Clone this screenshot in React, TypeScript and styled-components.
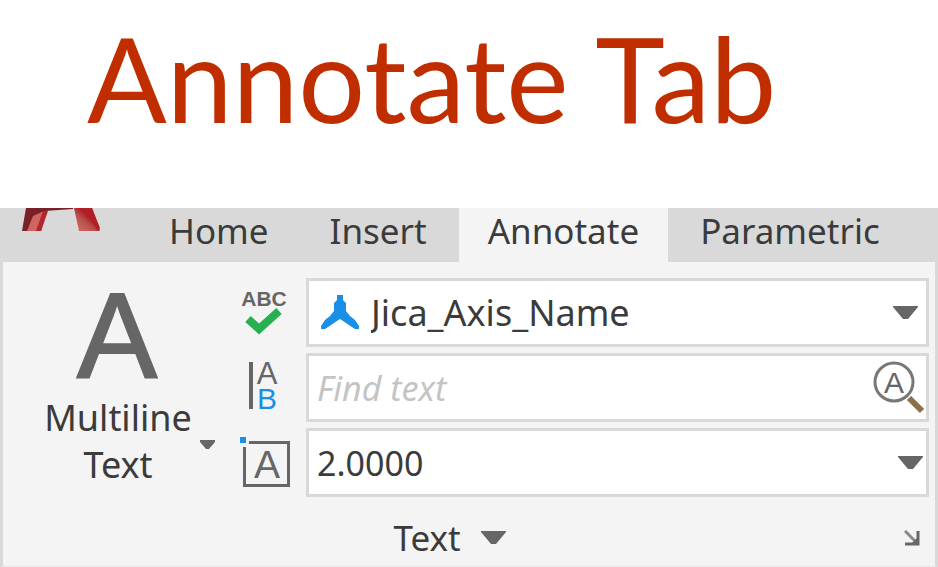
import React from 'react';
import styled, { createGlobalStyle } from 'styled-components';

const Global = createGlobalStyle`
  * { box-sizing: border-box; }
  body { margin: 0; background: #fff; font-family: "Noto Sans", "Open Sans", sans-serif; color: #3b3b3b; }
  button, input, select { font: inherit; color: inherit; }
`;

const Page = styled.div`
  display: flex;
  flex-direction: column;
  min-height: 100vh;
`;

const Title = styled.h1`
  margin: 0;
  padding: 6px 0 58px 87px;
  font-family: Lato, "Noto Sans", sans-serif;
  font-size: 118px;
  line-height: 144px;
  font-weight: 400;
  color: #c02e00;
  white-space: nowrap;
`;

const TabBar = styled.nav`
  display: flex;
  gap: 3px;
  height: 54px;
  background: #d9d9d9;
`;

const Logo = styled.svg`
  flex: none;
  width: 80px;
  height: 24px;
  margin: 0 36px 0 21px;
`;

const Tab = styled.button<{ $active?: boolean }>`
  border: 0;
  padding: 0 29px 8px;
  background: ${p => (p.$active ? '#f4f4f4' : 'transparent')};
  font-size: 35px;
  line-height: 46px;
  white-space: nowrap;
`;

const Panel = styled.main`
  flex: 1;
  display: flex;
  flex-direction: column;
  background: #f4f4f4;
  border: solid #d9d9d9;
  border-width: 0 3px;
  border-bottom: 1px solid #e8e8e8;
`;

const Tools = styled.div`
  display: grid;
  grid-template-columns: 231px 72px 1fr;
  padding: 16px 6px 0 0;
`;

const Multiline = styled.button`
  display: grid;
  grid-template-columns: 148px 1fr;
  grid-template-rows: 108px auto;
  align-content: start;
  border: 0;
  background: none;
  padding: 8px 0 0 41px;
  font-size: 36px;
  line-height: 47px;
  text-align: center;
`;

const BigLetter = styled.svg`
  grid-column: 1;
  justify-self: center;
  width: 90px;
  height: 96px;
  overflow: visible;
  font-family: "Liberation Sans", sans-serif;
`;

const MultilineLabel = styled.span`
  grid-column: 1;
  justify-self: center;
`;

const MultilineArrow = styled.span`
  grid-column: 2;
  display: flex;
  padding: 46px 0 0 8px;
`;

const Column = styled.div`
  display: flex;
  flex-direction: column;
  gap: 6px;
  min-width: 0;
`;

const IconButton = styled.button`
  display: flex;
  padding: 0;
  border: 0;
  background: none;
`;

const Icon = styled.svg`
  width: 72px;
  height: 69px;
  font-family: "Liberation Sans", sans-serif;
`;

const Field = styled.div<{ $end?: number }>`
  display: flex;
  align-items: center;
  height: 69px;
  padding: 0 ${p => p.$end ?? 8}px 0 8px;
  background: #fff;
  border: 3px solid #d9d9d9;
`;

const StyleMark = styled.svg`
  flex: none;
  width: 38px;
  height: 36px;
  margin: 0 12px 0 4px;
`;

const Select = styled.select<{ $size: number }>`
  flex: 1;
  min-width: 0;
  appearance: none;
  border: 0;
  background: none;
  padding: 0;
  outline: 0;
  font-size: ${p => p.$size}px;
`;

const Input = styled.input`
  flex: 1;
  min-width: 0;
  border: 0;
  background: none;
  padding: 0;
  outline: 0;
  font-size: 34px;
  &::placeholder { color: #c4c4c4; font-style: italic; opacity: 1; }
`;

const SearchButton = styled.button`
  display: flex;
  border: 0;
  padding: 0;
  background: none;
`;

const Footer = styled.footer`
  display: grid;
  grid-template-columns: 1fr auto 1fr;
  align-items: center;
  flex: 1;
  padding: 12px 15px 0 0;
`;

const Caption = styled.button`
  grid-column: 2;
  display: flex;
  align-items: center;
  gap: 20px;
  margin-right: 24px;
  border: 0;
  padding: 0;
  background: none;
  font-size: 35px;
  line-height: 46px;
`;

const Launcher = styled.button`
  justify-self: end;
  border: 0;
  padding: 0;
  background: none;
  display: flex;
`;

const Arrow = ({ small }: { small?: boolean }) => (
  <svg width={small ? 15 : 25} height={small ? 9 : 13} viewBox={small ? '0 0 15 9' : '0 0 25 13'} aria-hidden="true">
    <path d={small ? 'M0 0h15v2l-6 7H6L0 2z' : 'M0 0h25v1L15 13h-5L0 1z'} fill="#666" />
  </svg>
);

export default function App() {
  return (
    <Page>
      <Global />
      <Title>Annotate Tab</Title>
      <TabBar>
        <Logo viewBox="0 0 80 24" role="img" aria-label="Application logo">
          <defs>
            <linearGradient id="right" x1="0" y1="1" x2="1" y2="0">
              <stop offset="0" stopColor="#d9706c" />
              <stop offset="0.4" stopColor="#b9524c" />
              <stop offset="0.6" stopColor="#b01f25" />
            </linearGradient>
          </defs>
          <path d="M5 0h22l-7 23H1z" fill="#7a2028" />
          <path d="M12 8l11-5-6 20H6z" fill="#cf6560" />
          <path d="M22 3h5l-7 20h-5z" fill="#b3262e" />
          <path d="M5 0h47v1l-28 2-12 2z" fill="#7a2028" />
          <path d="M53 0h18l8 23H58z" fill="url(#right)" />
          <path d="M62 0h9l8 20-2 3z" fill="#b01f25" />
        </Logo>
        <Tab>Home</Tab>
        <Tab>Insert</Tab>
        <Tab $active aria-current="page">Annotate</Tab>
        <Tab>Parametric</Tab>
      </TabBar>
      <Panel>
        <Tools>
          <Multiline>
            <BigLetter viewBox="0 0 90 96" aria-hidden="true">
              <text x="44" y="91" textAnchor="middle" fontSize="120" fill="#666" stroke="#666" strokeWidth="2">A</text>
            </BigLetter>
            <MultilineLabel>Multiline Text</MultilineLabel>
            <MultilineArrow><Arrow small /></MultilineArrow>
          </Multiline>
          <Column>
            <IconButton aria-label="Check spelling">
              <Icon viewBox="0 0 72 69" aria-hidden="true">
                <text x="30" y="28" textAnchor="middle" fontSize="21" fontWeight="700" fill="#666">ABC</text>
                <path d="M14 41l11 10 20-18" fill="none" stroke="#26b050" strokeWidth="8" />
              </Icon>
            </IconButton>
            <IconButton aria-label="Align text">
              <Icon viewBox="0 0 72 69" aria-hidden="true">
                <path d="M15 9h4v47h-4z" fill="#666" />
                <text x="33" y="31" textAnchor="middle" fontSize="31" fill="#666">A</text>
                <text x="33" y="56" textAnchor="middle" fontSize="30" fill="#1a8fe8">B</text>
              </Icon>
            </IconButton>
            <IconButton aria-label="Text frame">
              <Icon viewBox="0 0 72 69" aria-hidden="true">
                <path d="M15 14.500h39.500v43h-44V19" fill="none" stroke="#666" strokeWidth="3" />
                <path d="M6 9h6v6H6z" fill="#1a8fe8" />
                <text x="33" y="50" textAnchor="middle" fontSize="39" fill="#666">A</text>
              </Icon>
            </IconButton>
          </Column>
          <Column>
            <Field>
              <StyleMark viewBox="0 0 38 36" aria-hidden="true">
                <path d="M16 0h6v5l3 3v8l4 5 5 4 4 6v3h-4l-9-6-6-4-6 4-9 6H0v-3l4-6 5-4 4-5V8l3-3z" fill="#1a8fe8" />
              </StyleMark>
              <Select $size={36} aria-label="Text style"><option>Jica_Axis_Name</option></Select>
              <Arrow />
            </Field>
            <Field $end={2}>
              <Input aria-label="Find text" placeholder="Find text" />
              <SearchButton aria-label="Search">
                <svg width="52" height="56" viewBox="0 0 52 56" fontFamily="Liberation Sans, sans-serif" aria-hidden="true">
                  <circle cx="22" cy="22" r="19" fill="none" stroke="#777" strokeWidth="3" />
                  <text x="22" y="33" textAnchor="middle" fontSize="30" fill="#666">A</text>
                  <path d="M37 38l13 13" stroke="#8c7047" strokeWidth="6" />
                </svg>
              </SearchButton>
            </Field>
            <Field $end={3}>
              <Select $size={34} aria-label="Text height"><option>2.0000</option></Select>
              <Arrow />
            </Field>
          </Column>
        </Tools>
        <Footer>
          <Caption>Text <Arrow /></Caption>
          <Launcher aria-label="Text settings">
            <svg width="16" height="16" viewBox="0 0 16 16" fill="none" aria-hidden="true">
              <path d="M1 1l11 11" stroke="#888" strokeWidth="3" />
              <path d="M14 1v13H1" stroke="#666" strokeWidth="3" />
              <path d="M14 7v7H7z" fill="#666" />
            </svg>
          </Launcher>
        </Footer>
      </Panel>
    </Page>
  );
}
